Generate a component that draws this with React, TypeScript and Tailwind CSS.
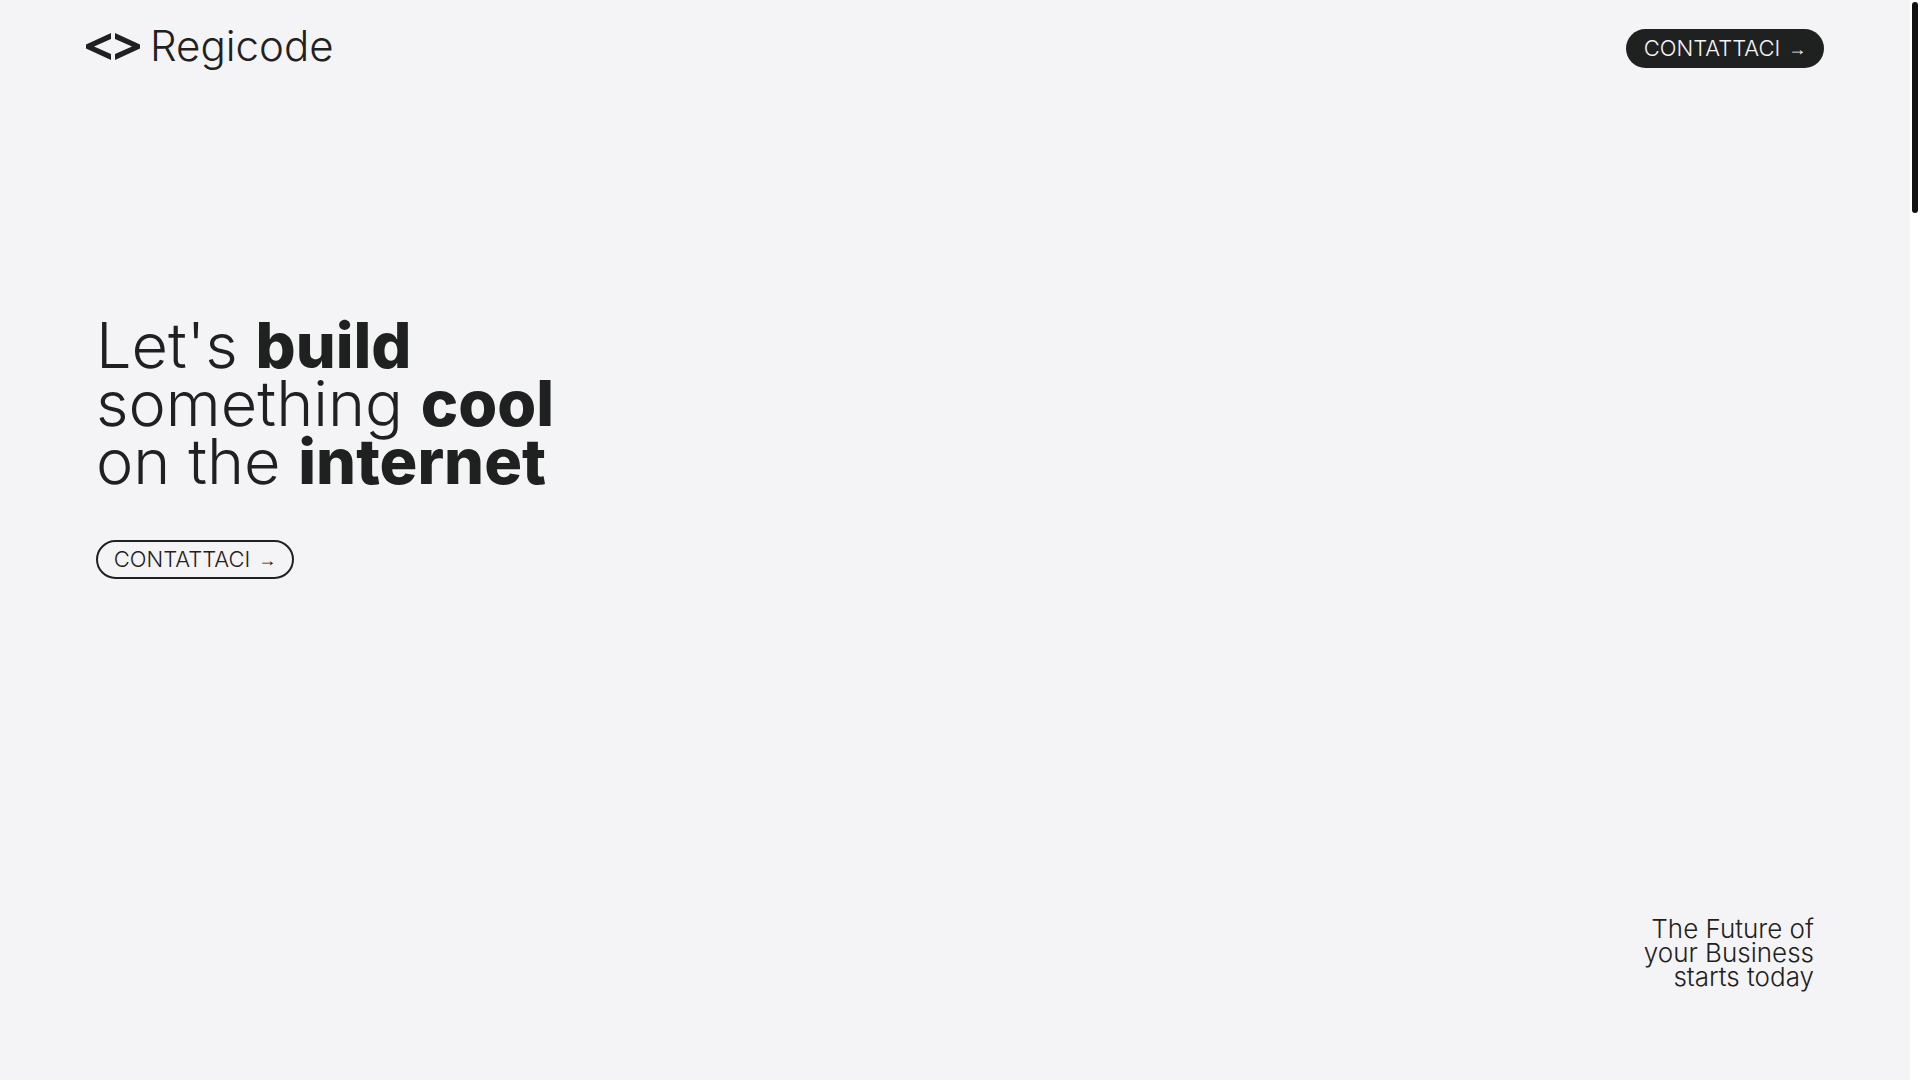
const Logo = () => (
  <a href="#" className="flex items-center gap-[10px]" aria-label="Regicode">
    <svg viewBox="0 0 54 27" className="w-[54px] h-[27px]" fill="currentColor" aria-hidden="true">
      <path d="M25 0v6L8 13.5 25 21v6L0 15.5v-4z" />
      <path d="M29 0v6l17 7.5L29 21v6l25-11.5v-4z" />
    </svg>
    <span className="text-[42px] leading-[48px] font-light">Regicode</span>
  </a>
);

function Header() {
  return (
    <header className="flex items-start justify-between px-[86px] pt-[22px]">
      <Logo />
      <button
        type="button"
        className="mt-[7px] flex h-[39px] w-[198px] items-center justify-center gap-2 rounded-full bg-[#1f2120] text-[22px] font-light text-[#f4f4f6]"
      >
        CONTATTACI <span className="font-['Liberation_Sans',sans-serif] text-lg">→</span>
      </button>
    </header>
  );
}

function Hero() {
  return (
    <section className="flex-1 px-24 pt-[246px]">
      <h1 className="text-[63px] leading-[58px] font-light">
        Let's <b className="font-extrabold">build</b>
        <br />
        something <b className="font-extrabold">cool</b>
        <br />
        on the <b className="font-extrabold">internet</b>
      </h1>
      <button
        type="button"
        className="mt-[50px] flex h-[39px] w-[198px] items-center justify-center gap-2 rounded-full border-2 border-[#1f2120] text-[22px] font-light"
      >
        CONTATTACI <span className="font-['Liberation_Sans',sans-serif] text-lg">→</span>
      </button>
    </section>
  );
}

export default function App() {
  return (
    <div className="flex min-h-screen bg-white font-['Inter','Liberation_Sans',sans-serif] text-[#1f2120]">
      <main className="flex flex-1 flex-col bg-[#f4f4f6]">
        <Header />
        <Hero />
        <p className="px-24 pb-[91px] text-right text-[26px] leading-[24px] font-light">
          The Future of
          <br />
          your Business
          <br />
          starts today
        </p>
      </main>

      {/* Scroll track */}
      <div className="w-[10px] px-[2px] pt-[2px]">
        <div className="h-[211px] rounded-full bg-[#111111]"></div>
      </div>
    </div>
  );
}
